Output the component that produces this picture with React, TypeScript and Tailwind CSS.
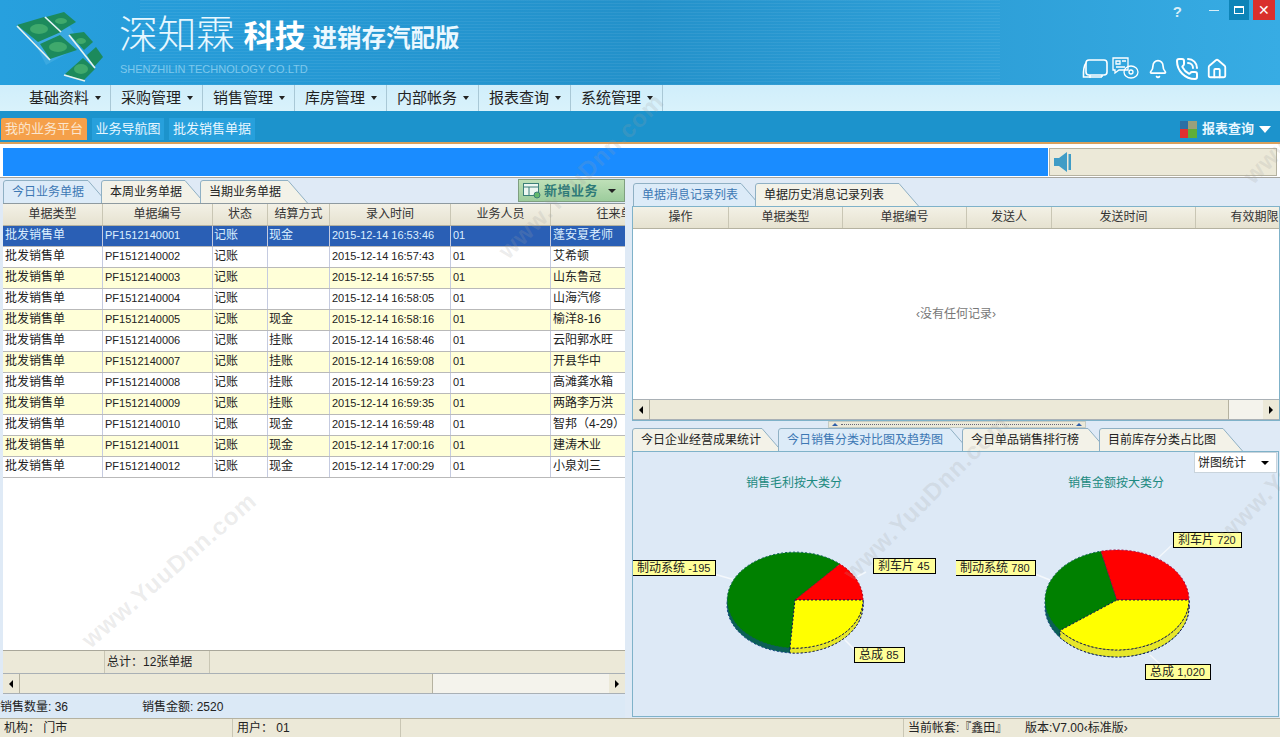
import { Bell, House, PhoneCall } from "lucide-react";

const rows = [
  ["PF1512140001", "现金", "16:53:46", "蓬安夏老师"],
  ["PF1512140002", "", "16:57:43", "艾希顿"],
  ["PF1512140003", "", "16:57:55", "山东鲁冠"],
  ["PF1512140004", "", "16:58:05", "山海汽修"],
  ["PF1512140005", "现金", "16:58:16", "榆洋8-16"],
  ["PF1512140006", "挂账", "16:58:46", "云阳郭水旺"],
  ["PF1512140007", "挂账", "16:59:08", "开县华中"],
  ["PF1512140008", "挂账", "16:59:23", "高滩龚水箱"],
  ["PF1512140009", "挂账", "16:59:35", "两路李万洪"],
  ["PF1512140010", "现金", "16:59:48", "智邦（4-29）"],
  ["PF1512140011", "现金", "17:00:16", "建涛木业"],
  ["PF1512140012", "现金", "17:00:29", "小泉刘三"],
];

const menus = ["基础资料", "采购管理", "销售管理", "库房管理", "内部帐务", "报表查询", "系统管理"];

const leftCols = [
  ["单据类型", "w-[100px]"],
  ["单据编号", "w-[110px]"],
  ["状态", "w-[55px]"],
  ["结算方式", "w-[62px]"],
  ["录入时间", "w-[121px]"],
  ["业务人员", "w-[100px]"],
  ["往来单位", "w-[140px]"],
];

const rightCols = [
  ["操作", "w-[96px]"],
  ["单据类型", "w-[114px]"],
  ["单据编号", "w-[124px]"],
  ["发送人", "w-[85px]"],
  ["发送时间", "w-[144px]"],
  ["有效期限", "w-[118px]"],
];

const Tab = ({ label, width, active, className }: { label: string; width: number; active?: boolean; className?: string }) => {
  const h = 23;
  return (
    <div className={`relative h-[23px] shrink-0 ${className ?? ""}`} style={{ width }}>
      <svg className="absolute inset-0" width={width} height={h}>
        <path
          d={`M0.5 ${h} V3 Q0.5 0.5 3 0.5 H${width - 20} L${width - 0.5} ${h}`}
          fill={active ? "#dcebf8" : "#f3f2e8"}
          stroke="#8fb0c4"
        />
      </svg>
      <span className={`absolute left-[9px] top-[4px] text-[12px] leading-[16px] whitespace-nowrap ${active ? "text-[#3d78b4]" : "text-[#222]"}`}>
        {label}
      </span>
    </div>
  );
};

const HeaderRow = ({ cols }: { cols: string[][] }) => (
  <div className="flex h-[22px] shrink-0 overflow-hidden border-b border-[#b5b2a0] bg-gradient-to-b from-[#f3f1e6] to-[#e6e2d0]">
    {cols.map(([label, w]) => (
      <div key={label} className={`${w} shrink-0 border-r border-[#c9c6b4] text-center text-[12px] leading-[21px] text-[#333]`}>
        {label}
      </div>
    ))}
  </div>
);

const ScrollBar = ({ thumb }: { thumb: string }) => (
  <div className="flex h-[21px] shrink-0 items-center border-y border-[#a9b0b5] bg-[#f4f3ec]">
    <div className="flex h-full w-[16px] shrink-0 items-center justify-center bg-[#ece9d8]">
      <div className="h-0 w-0 border-y-[4px] border-r-[4px] border-y-transparent border-r-black" />
    </div>
    <div className={`${thumb} h-full shrink-0 border-x border-[#b5b2a0] bg-[#ece9d8]`} />
    <div className="flex-1" />
    <div className="flex h-full w-[16px] shrink-0 items-center justify-center bg-[#ece9d8]">
      <div className="h-0 w-0 border-y-[4px] border-l-[4px] border-y-transparent border-l-black" />
    </div>
  </div>
);

const ChartLabel = ({ name, value, className }: { name: string; value: string; className: string }) => (
  <div className={`absolute h-[16px] whitespace-nowrap border border-black bg-[#ffff99] pl-[4px] pr-[5px] text-[12px] leading-[14px] text-[#222] ${className}`}>
    {name} <span className="text-[11px]">{value}</span>
  </div>
);

const Logo = () => (
  <svg width="106" height="82" viewBox="0 0 106 82" className="mt-[3px] ml-[16px] shrink-0">
    <path d="M14 30 L50 18 L66 42 L30 62 Z" fill="#4db4e6" fillOpacity="0.5" />
    <g fill="#1c8a5c">
      <path d="M1 22 L28 14 L45 29 L22 39 Z" />
      <path d="M30 14 L48 9 L60 19 L45 28 Z" />
      <path d="M24 41 L44 32 L61 47 L34 56 Z" />
      <path d="M53 31 L68 29 L77 39 L68 47 Z" />
      <path d="M71 52 L80 44 L87 54 L78 64 Z" />
      <path d="M49 71 L67 55 L79 66 L67 78 Z" />
    </g>
    <g fill="#3fa96c">
      <ellipse cx="23" cy="26" rx="9" ry="5" />
      <ellipse cx="45" cy="18" rx="6" ry="3" />
      <ellipse cx="42" cy="44" rx="9" ry="5" />
      <ellipse cx="65" cy="38" rx="5" ry="3" />
      <ellipse cx="65" cy="66" rx="7" ry="5" />
    </g>
    <g stroke="#e8f4ee" strokeWidth="1.6" fill="none">
      <path d="M1 23 L34 57" />
      <path d="M29 14 L45 29" />
      <path d="M53 32 L79 65" />
      <path d="M48 72 L69 78" />
    </g>
  </svg>
);

const Watermark = ({ className }: { className: string }) => (
  <div className={`absolute whitespace-nowrap text-[24px] font-bold tracking-[1px] text-[#a0a0a0]/20 ${className}`}>
    www.YuuDnn.com
  </div>
);

export default function App() {
  return (
    <div className="relative flex h-[737px] w-full flex-col overflow-hidden bg-[#dfeaf6] font-['Liberation_Sans','Noto_Sans_CJK_SC',sans-serif] text-[#222]">
      {/* top banner */}
      <div className="relative flex h-[85px] shrink-0 bg-gradient-to-r from-[#27a0de] via-[#2391ca] to-[#37ace4]">
        <div className="absolute inset-y-0 left-[140px] w-[860px] bg-[repeating-linear-gradient(0deg,rgba(255,255,255,0.06)_0px,rgba(255,255,255,0.06)_1px,transparent_1px,transparent_3px)]" />
        <Logo />
        <div className="relative ml-[-3px] flex flex-col">
          <div className="flex h-[60px] items-end">
            <span className="text-[39px] font-light leading-[50px] tracking-[-0.5px] text-[#e6f7ff]">深知霖</span>
            <span className="ml-[9px] text-[31px] font-bold leading-[46px] text-white">科技</span>
            <span className="ml-[7px] text-[24.5px] font-bold leading-[42px] text-[#eaf8ff]">进销存汽配版</span>
          </div>
          <span className="ml-[1px] mt-[2px] text-[11px] leading-[14px] text-[#7ec8ec]">SHENZHILIN TECHNOLOGY CO.LTD</span>
        </div>
        <div className="absolute right-[5px] top-0 flex items-start text-white">
          <span className="mr-[27px] mt-[3px] text-[15px] font-bold leading-[18px] text-[#d8eef8]">?</span>
          <div className="mr-[10px] mt-[10px] h-[1px] w-[10px] bg-[#d8eef8]" />
          <div className="mr-[4px] flex h-[20px] w-[20px] items-center justify-center bg-[#0d84b8]">
            <div className="h-[8px] w-[10px] border border-t-2 border-white" />
          </div>
          <div className="flex h-[20px] w-[22px] items-center justify-center bg-[#d9302c] text-[14px] leading-none">✕</div>
        </div>
        <div className="absolute right-[52px] top-[57px] flex items-center gap-[7px] text-white">
          <svg width="26" height="24" viewBox="0 0 26 24" fill="none" stroke="currentColor" strokeWidth="1.6">
            <rect x="4" y="3" width="21" height="15" rx="3" />
            <path d="M4 6 Q1 10 1.5 20 H5 M5 20 L20 20 M8 18 V21 M20 18 V20" />
          </svg>
          <svg width="27" height="24" viewBox="0 0 27 24" fill="none" stroke="currentColor" strokeWidth="1.3" className="-ml-[3px]">
            <path d="M1 1 H16 V13 H7 L3 16 V13 H1 Z" />
            <path d="M4 4 H8 V7 H4 Z M10 4 H14 M4 10 H13" />
            <ellipse cx="19" cy="15" rx="7" ry="6" />
            <circle cx="19" cy="15" r="2" />
          </svg>
          <Bell size={20} strokeWidth={2} className="ml-[2px]" />
          <PhoneCall size={24} strokeWidth={2} />
          <House size={22} strokeWidth={2} />
        </div>
      </div>

      {/* main menu */}
      <div className="flex h-[26px] shrink-0 bg-gradient-to-b from-[#d0eefb] to-[#d9f2fb] pl-[19px]">
        {menus.map((m) => (
          <div key={m} className="flex h-full w-[92px] shrink-0 items-center border-r border-[#a9c8d6] pl-[10px] text-[15px] text-[#222]">
            {m}
            <div className="ml-[6px] h-0 w-0 border-x-[3.5px] border-t-[4px] border-x-transparent border-t-[#222]" />
          </div>
        ))}
      </div>

      {/* sub bar */}
      <div className="flex h-[33px] shrink-0 items-end justify-between border-b-2 border-[#d9a05c] bg-[#1c93cc] pl-[1px] pr-[9px] pb-[2px]">
        <div className="flex gap-[5px] text-[13px] leading-[22px]">
          <div className="h-[22px] w-[86px] rounded-t-[2px] bg-[#f5a04a] text-center text-[#fbe6cf]">我的业务平台</div>
          <div className="h-[22px] w-[72px] bg-[#27a0dc] text-center text-[#e6f6ff]">业务导航图</div>
          <div className="h-[22px] w-[86px] bg-[#27a0dc] text-center text-[#e6f6ff]">批发销售单据</div>
        </div>
        <div className="mb-[2px] flex items-center text-[13px] font-bold leading-[18px] text-[#e8f7ff]">
          <div className="mr-[5px] grid h-[17px] w-[17px] grid-cols-2">
            <div className="bg-[#2a6fa5]" />
            <div className="bg-[#9aa07b]" />
            <div className="bg-[#e03030]" />
            <div className="bg-[#5fae3a]" />
          </div>
          报表查询
          <div className="ml-[5px] h-0 w-0 border-x-[6px] border-t-[7px] border-x-transparent border-t-white" />
        </div>
      </div>

      {/* notice strip */}
      <div className="flex h-[34px] shrink-0 items-stretch border-b border-[#a5a5a0] bg-white pb-[1px] pl-[3px] pr-[3px] pt-[4px]">
        <div className="w-[1045px] shrink-0 bg-[#1a8cff]" />
        <div className="ml-[1px] flex flex-1 items-center border border-[#b5b2a0] bg-[#ece9d8] pl-[4px]">
          <svg width="18" height="22" viewBox="0 0 18 22" fill="#3f9cc6">
            <path d="M0 7 H5 L13 1 V21 L5 15 H0 Z" />
            <rect x="14.5" y="3" width="2.5" height="16" />
          </svg>
        </div>
      </div>

      {/* main area */}
      <div className="flex min-h-0 flex-1">
        {/* left panel */}
        <div className="flex w-[625px] shrink-0 flex-col">
          <div className="flex min-h-0 flex-1 flex-col pl-[3px]">
            <div className="flex h-[25px] shrink-0 items-end justify-between">
              <div className="flex">
                <Tab label="今日业务单据" width={105} active />
                <Tab label="本周业务单据" width={104} className="-ml-[7px]" />
                <Tab label="当期业务单据" width={108} className="-ml-[5px]" />
              </div>
              <div className="mb-[1px] flex h-[23px] w-[107px] items-center border border-[#7f9f80] bg-gradient-to-b from-[#bfe0b8] to-[#9ccc9c] pl-[3px]">
                <svg width="20" height="17" viewBox="0 0 20 17" fill="none" stroke="#3d7f78" className="shrink-0">
                  <rect x="1.5" y="1.5" width="15" height="12" fill="#eef7f2" />
                  <path d="M1.5 5 H16.5 M7 5 V13" />
                  <circle cx="15" cy="13" r="3" fill="#63b96b" />
                </svg>
                <span className="ml-[2px] text-[13px] font-bold tracking-[0.5px] text-[#2e7a78]">新增业务</span>
                <div className="ml-[10px] h-0 w-0 border-x-[4px] border-t-[4px] border-x-transparent border-t-[#222]" />
              </div>
            </div>
            <div className="flex min-h-0 flex-1 flex-col overflow-hidden border-t border-[#8e9aa0] bg-white">
              <HeaderRow cols={leftCols} />
              <div className="min-h-0 flex-1 overflow-hidden">
                {rows.map((r, i) => (
                  <div
                    key={r[0]}
                    className={`flex h-[21px] border-b border-[#b9b9b9] text-[12px] leading-[18px] ${i === 0 ? "bg-[#2a5fb5] text-[#dcefff]" : i % 2 === 0 ? "bg-[#ffffd8]" : "bg-white"}`}
                  >
                    <div className="w-[100px] shrink-0 border-r border-[#c5cbe0] pl-[2px]">批发销售单</div>
                    <div className="w-[110px] shrink-0 border-r border-[#c5cbe0] pl-[2px] text-[11px]">{r[0]}</div>
                    <div className="w-[55px] shrink-0 border-r border-[#c5cbe0] pl-[1px]">记账</div>
                    <div className="w-[62px] shrink-0 border-r border-[#c5cbe0] pl-[1px]">{r[1]}</div>
                    <div className="w-[121px] shrink-0 border-r border-[#c5cbe0] pl-[2px] text-[11px]">2015-12-14 {r[2]}</div>
                    <div className="w-[100px] shrink-0 border-r border-[#c5cbe0] pl-[2px] text-[11px]">01</div>
                    <div className="w-[140px] shrink-0 pl-[2px]">{r[3]}</div>
                  </div>
                ))}
              </div>
              <div className="flex h-[23px] shrink-0 border-t border-[#a9a79a] bg-[#ece9d8] pl-[101px]">
                <div className="w-[106px] border-x border-[#c9c6b4] bg-[#e9e6d6] pl-[2px] text-[12px] leading-[22px]">总计：12张单据</div>
              </div>
              <ScrollBar thumb="w-[414px]" />
            </div>
          </div>
          <div className="mt-[2px] flex h-[22px] shrink-0 items-center gap-[70px] bg-[#dbe9f6] text-[12px]">
            <span className="w-[72px] whitespace-nowrap">销售数量: 36</span>
            <span>销售金额: 2520</span>
          </div>
        </div>

        {/* right panel */}
        <div className="ml-[7px] flex min-w-0 flex-1 flex-col">
          <div className="flex h-[28px] shrink-0 items-end pl-[1px]">
            <Tab label="单据消息记录列表" width={128} active />
            <Tab label="单据历史消息记录列表" width={164} className="-ml-[6px]" />
          </div>
          <div className="flex h-[215px] shrink-0 flex-col border border-[#7fb2c9] bg-white">
            <HeaderRow cols={rightCols} />
            <div className="flex flex-1 items-center justify-center text-[12px] text-[#777]">‹没有任何记录›</div>
            <ScrollBar thumb="w-[580px]" />
          </div>
          <div className="flex h-[7px] shrink-0 justify-center">
            <div className="mr-[-2px] flex h-[7px] w-[258px] items-center justify-between border border-[#c5ccc5] bg-[#ece9d8] px-[3px]">
              <div className="h-0 w-0 border-x-[3px] border-b-[3px] border-x-transparent border-b-[#2f5fa8]" />
              <div className="mx-[3px] flex-1 border-t border-dotted border-[#667]" />
              <div className="h-0 w-0 border-x-[3px] border-b-[3px] border-x-transparent border-b-[#2f5fa8]" />
            </div>
          </div>
          <div className="flex h-[23px] shrink-0 items-end">
            <Tab label="今日企业经营成果统计" width={150} />
            <Tab label="今日销售分类对比图及趋势图" width={192} active className="-ml-[4px]" />
            <Tab label="今日单品销售排行榜" width={146} className="-ml-[8px]" />
            <Tab label="目前库存分类占比图" width={144} className="-ml-[9px]" />
          </div>
          <div className="relative mb-[1px] mr-[1px] min-h-0 flex-1 overflow-hidden border border-[#7fb2c9] bg-[#dde9f6]">
            <div className="absolute right-[1px] top-[0px] flex h-[21px] w-[83px] items-center justify-between border border-[#c9d4dc] bg-white pl-[3px] pr-[7px] text-[12px]">
              饼图统计
              <div className="h-0 w-0 border-x-[4px] border-t-[4px] border-x-transparent border-t-black" />
            </div>
            <div className="absolute left-[113px] top-[22px] text-[12px] text-[#1b8a80]">销售毛利按大类分</div>
            <div className="absolute left-[435px] top-[22px] text-[12px] text-[#1b8a80]">销售金额按大类分</div>
            <svg className="absolute left-0 top-0" width="646" height="265" viewBox="633 452 646 265">
              {/* left pie */}
              <path d="M700 570 L735 580 M866 572 L845 583 M855 650 L845 640" stroke="#f4f8fc" strokeWidth="1.5" fill="none" />
              <ellipse cx="795" cy="605" rx="68" ry="48" fill="#0b5f55" stroke="#0b3f80" strokeDasharray="2 2" />
              <path d="M863 605 A68 48 0 0 1 790 653 L790 648 A68 48 0 0 0 863 600 Z" fill="#e6e62a" stroke="#111155" strokeDasharray="2 2" />
              <path d="M795 600 L790 648 A68 48 0 1 1 840 564 Z" fill="#008000" stroke="#0b5f55" strokeDasharray="2 2" />
              <path d="M795 600 L840 564 A68 48 0 0 1 863 600 Z" fill="#ff0000" stroke="#b00020" strokeDasharray="2 2" />
              <path d="M795 600 L863 600 A68 48 0 0 1 790 648 Z" fill="#ffff00" stroke="#111155" strokeDasharray="2 2" />

              {/* right pie */}
              <path d="M1030 572 L1050 580 M1172 545 L1158 558 M1160 664 L1150 655" stroke="#f4f8fc" strokeWidth="1.5" fill="none" />
              <ellipse cx="1117" cy="607" rx="72" ry="50" fill="#0b5f55" stroke="#0b3f80" strokeDasharray="2 2" />
              <path d="M1189 607 A72 50 0 0 1 1060 637.5 L1060 630.5 A72 50 0 0 0 1189 600 Z" fill="#e6e62a" stroke="#111155" strokeDasharray="2 2" />
              <path d="M1117 600 L1060 630.5 A72 50 0 0 1 1101 551.2 Z" fill="#008000" stroke="#0b5f55" strokeDasharray="2 2" />
              <path d="M1117 600 L1101 551.2 A72 50 0 0 1 1189 600 Z" fill="#ff0000" stroke="#a00040" strokeDasharray="2 2" />
              <path d="M1117 600 L1189 600 A72 50 0 0 1 1060 630.5 Z" fill="#ffff00" stroke="#111155" strokeDasharray="2 2" />
            </svg>
            <ChartLabel name="制动系统" value="-195" className="left-[0px] top-[108px] border-l-0 pl-[2px]" />
            <ChartLabel name="刹车片" value="45" className="left-[240px] top-[106px]" />
            <ChartLabel name="总成" value="85" className="left-[221px] top-[195px]" />
            <ChartLabel name="制动系统" value="780" className="left-[323px] top-[108px] border-l-0 pl-[2px]" />
            <ChartLabel name="刹车片" value="720" className="left-[540px] top-[80px]" />
            <ChartLabel name="总成" value="1,020" className="left-[512px] top-[212px]" />
          </div>
        </div>
      </div>

      {/* status bar */}
      <div className="flex h-[19px] shrink-0 border-t border-[#b5b2a0] bg-[#ece9d8] text-[12px] leading-[19px]">
        <div className="w-[233px] shrink-0 border-r border-[#c9c6b4] pl-[4px]">机构： 门市</div>
        <div className="w-[168px] shrink-0 border-r border-[#c9c6b4] pl-[4px]">用户： 01</div>
        <div className="w-[503px] shrink-0 border-r border-[#c9c6b4]" />
        <div className="w-[106px] shrink-0 pl-[4px]">当前帐套:『鑫田』</div>
        <div className="flex-1 pl-[15px]">版本:V7.00‹标准版›</div>
      </div>

      {/* site watermark */}
      <div className="pointer-events-none absolute inset-0">
        <Watermark className="left-[470px] top-[158px] -rotate-[45deg]" />
        <Watermark className="left-[58px] top-[552px] -rotate-[41deg]" />
        <Watermark className="left-[815px] top-[480px] -rotate-[45deg]" />
        <Watermark className="left-[1215px] top-[83px] -rotate-[45deg]" />
        <Watermark className="left-[1190px] top-[440px] -rotate-[45deg]" />
      </div>
    </div>
  );
}
